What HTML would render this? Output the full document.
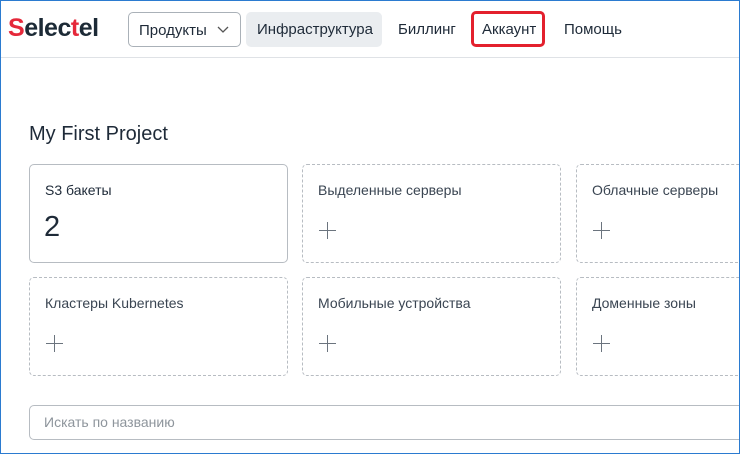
<!DOCTYPE html>
<html><head><meta charset="utf-8"><style>
*{box-sizing:border-box;margin:0;padding:0}
body{width:740px;height:454px;overflow:hidden;background:#fff;font-family:"Liberation Sans",sans-serif;color:#1e2a38;position:relative}
.frame{position:absolute;inset:0;border:1px solid #2b7bd0;pointer-events:none;z-index:10}
.hdr{position:absolute;left:0;top:0;width:740px;height:58px;border-bottom:1px solid #dfe2e6}
.logo{position:absolute;left:8px;top:14px;font-size:25px;font-weight:bold;letter-spacing:-0.5px;color:#1c2a36}
.logo .r{color:#e5283a}
.nav{position:absolute;top:12px;height:35px;font-size:15px;line-height:35px;padding:0 10px;border-radius:5px;color:#1e2a38}
.t{position:absolute;font-size:20px;left:29px;top:123px;color:#1e2a38}
.card{position:absolute;width:259px;height:99px;border:1px dashed #b7bcc2;border-radius:5px}
.card.s{border:1px solid #b7bcc2}
.card .l{position:absolute;left:15px;top:17px;font-size:14px;color:#3a4552}
.card.s .l{color:#1e2a38}
.card .n{position:absolute;left:14px;top:46px;font-size:29px;color:#1e2a38}
.card .p{position:absolute;left:16px;top:57px;width:18px;height:18px}
.card .p:before{content:"";position:absolute;left:0;top:8px;width:17px;height:1px;background:#6b747e}
.card .p:after{content:"";position:absolute;left:8px;top:0;width:1px;height:17px;background:#6b747e}
.search{position:absolute;left:29px;top:405px;width:720px;height:35px;border:1px solid #b7bcc2;border-radius:5px;font-size:14px;color:#8e959c;line-height:33px;padding-left:14px}
</style></head><body>
<div class="frame"></div>
<div class="hdr">
<div class="logo"><span class="r">S</span>elec<span class="r">t</span>el</div>
<div class="nav" style="left:128px;width:113px;border:1px solid #aab1b8">Продукты <svg width="14" height="10" style="margin-left:5px" viewBox="0 0 14 10"><path d="M2 2l5 5 5-5" fill="none" stroke="#555" stroke-width="1.3"/></svg></div>
<div class="nav" style="left:246px;width:136px;background:#eaedf0;padding-left:11px">Инфраструктура</div>
<div class="nav" style="left:388px">Биллинг</div>
<div class="nav" style="left:471px;top:11px;height:36px;width:74px;border:3px solid #e3202d;padding:0 8px;line-height:31px">Аккаунт</div>
<div class="nav" style="left:554px">Помощь</div>
</div>
<div class="t">My First Project</div>
<div class="card s" style="left:29px;top:164px"><div class="l">S3 бакеты</div><div class="n">2</div></div>
<div class="card" style="left:302px;top:164px"><div class="l">Выделенные серверы</div><div class="p"></div></div>
<div class="card" style="left:576px;top:164px"><div class="l">Облачные серверы</div><div class="p"></div></div>
<div class="card" style="left:29px;top:277px"><div class="l">Кластеры Kubernetes</div><div class="p"></div></div>
<div class="card" style="left:302px;top:277px"><div class="l">Мобильные устройства</div><div class="p"></div></div>
<div class="card" style="left:576px;top:277px"><div class="l">Доменные зоны</div><div class="p"></div></div>
<div class="search">Искать по названию</div>
</body></html>
